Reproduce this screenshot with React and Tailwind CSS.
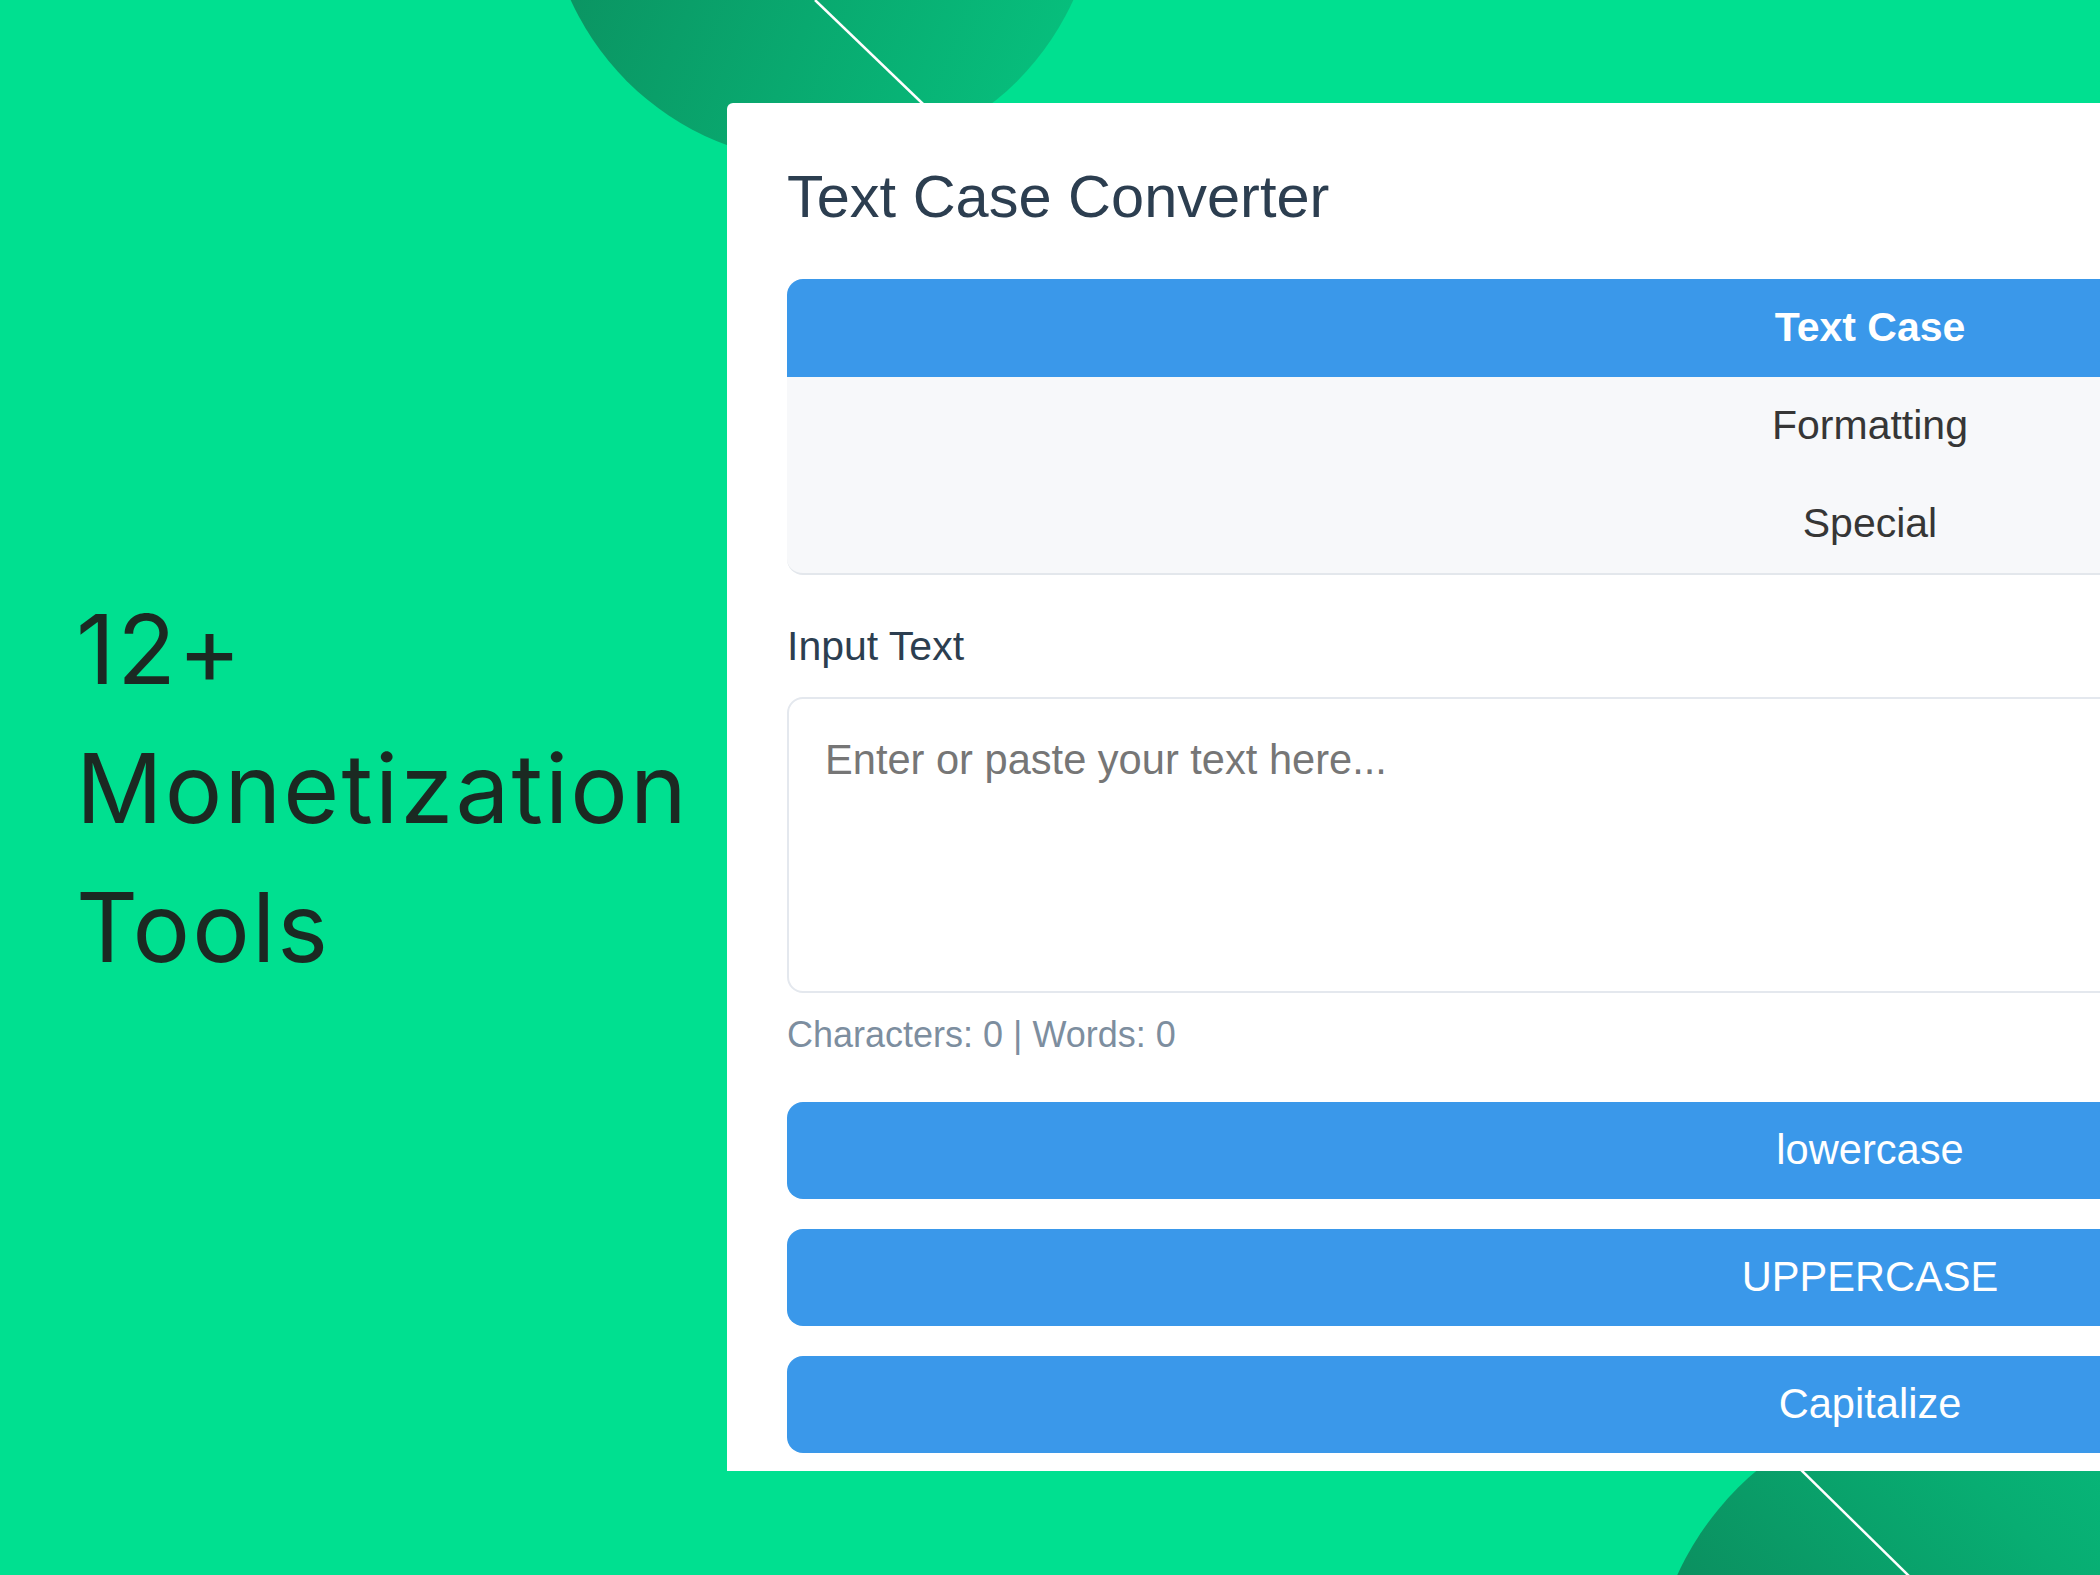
const tabs = [
  { label: 'Text Case', active: true },
  { label: 'Formatting', active: false },
  { label: 'Special', active: false },
];

const actions = ['lowercase', 'UPPERCASE', 'Capitalize'];

function Backdrop() {
  return (
    <svg className="absolute inset-0 z-0" width="2100" height="1575" viewBox="0 0 2100 1575">
      <defs>
        <linearGradient id="topBlob" x1="0" y1="0.2" x2="1" y2="0.6">
          <stop offset="0" stopColor="#0c8a5c" />
          <stop offset="1" stopColor="#07be7c" />
        </linearGradient>
        <linearGradient id="bottomBlob" x1="0" y1="1" x2="1" y2="0">
          <stop offset="0" stopColor="#0f6e4b" />
          <stop offset="0.7" stopColor="#08ad72" />
          <stop offset="1" stopColor="#06c07f" />
        </linearGradient>
      </defs>
      <circle cx="822" cy="-114" r="276" fill="url(#topBlob)" />
      <line x1="815" y1="0" x2="1000" y2="178" stroke="#ffffff" strokeWidth="2.5" />
      <circle cx="1950" cy="1700" r="300" fill="url(#bottomBlob)" />
      <line x1="1740" y1="1410" x2="1910" y2="1577" stroke="#ffffff" strokeWidth="2.5" />
    </svg>
  );
}

export default function App() {
  return (
    <div className="relative w-[2100px] h-[1575px] overflow-hidden bg-[#00e090]">
      <Backdrop />
      <div className="relative z-10 flex">
        <div className="w-[727px] shrink-0 pl-[76px] pt-[580px]">
          <h1 className="text-[96px] leading-[139px] font-normal text-[#1b2922] tracking-[0.022em]" style={{ fontFamily: 'Inter, "Noto Sans", sans-serif' }}>
            12+
            <br />
            Monetization
            <br />
            Tools
          </h1>
        </div>

        <div
          className="mt-[103px] w-[2286px] h-[1368px] shrink-0 bg-white rounded-tl-[6px] px-[60px] pt-[60px]"
          style={{ fontFamily: '"Liberation Sans", Arial, sans-serif' }}
        >
          <h2 className="text-[59.5px] leading-[67px] text-[#2c3e50]">Text Case Converter</h2>

          <div className="mt-[49px] rounded-[16px] overflow-hidden bg-[#f7f8fa] border-b-2 border-[#e3e7ec]">
            {tabs.map((tab) => (
              <div
                key={tab.label}
                className={`h-[98px] flex items-center justify-center text-[41px] ${
                  tab.active ? 'bg-[#3a98ea] text-white font-bold' : 'text-[#363636]'
                }`}
              >
                {tab.label}
              </div>
            ))}
          </div>

          <div className="mt-[47px] text-[41px] leading-[48px] text-[#2c3e50]">Input Text</div>

          <div className="mt-[27px] h-[296px] rounded-[16px] border-2 border-[#e4e8ee] pl-[36px] pt-[37px]">
            <div className="text-[41.6px] leading-[48px] text-[#767676]">Enter or paste your text here...</div>
          </div>

          <div className="mt-[21px] text-[36px] leading-[42px] text-[#7d8e9f]">Characters: 0 | Words: 0</div>

          <div className="mt-[46px] flex flex-col gap-[30px]">
            {actions.map((label) => (
              <div
                key={label}
                className="h-[97px] rounded-[16px] bg-[#3a98ea] flex items-center justify-center text-[41.6px] text-white"
              >
                {label}
              </div>
            ))}
          </div>
        </div>
      </div>
    </div>
  );
}
